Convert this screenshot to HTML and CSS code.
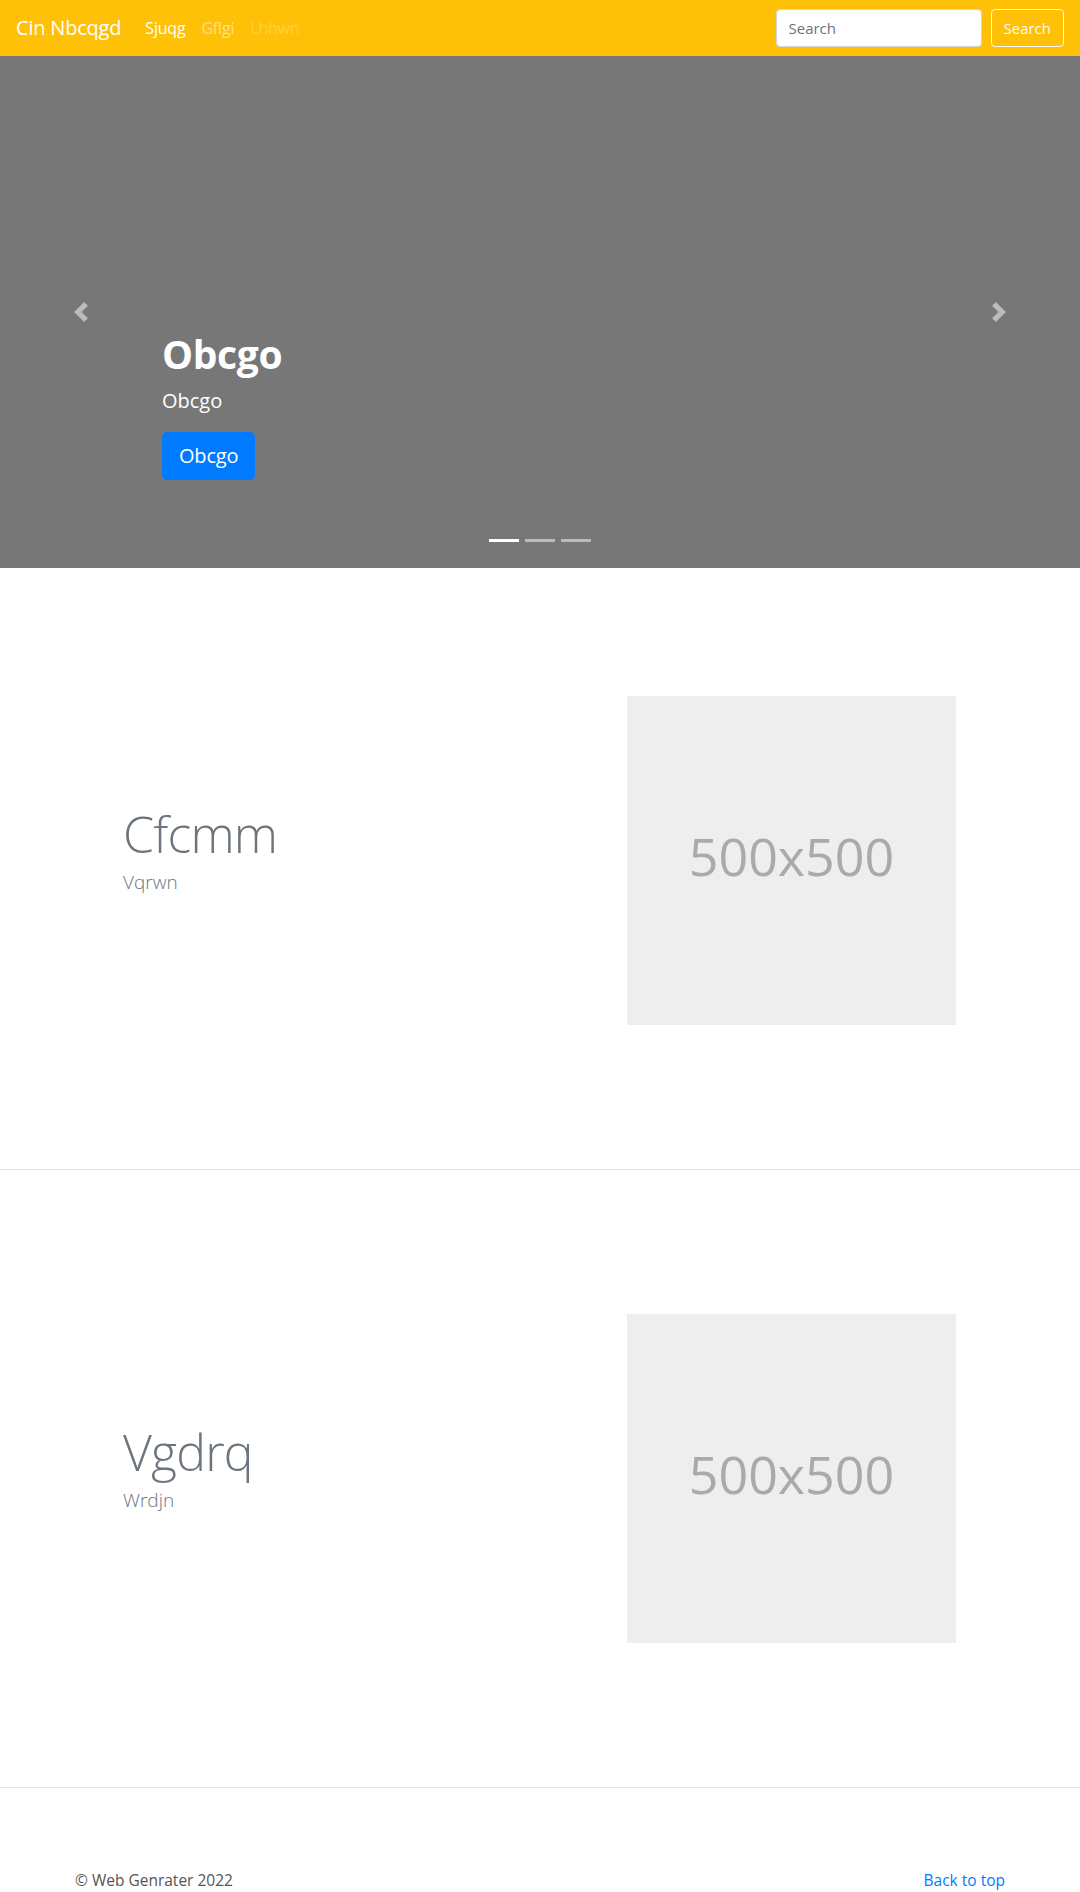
FILE: index.html
```html
<!DOCTYPE html>
<html lang="en">
<head>
<meta charset="utf-8">
<title>Cin Nbcqgd</title>
<link rel="stylesheet" href="styles.css">
</head>
<body>
<nav class="navbar">
  <a class="brand" href="#">Cin Nbcqgd</a>
  <ul class="nav">
    <li><a class="nav-link active" href="#">Sjuqg</a></li>
    <li><a class="nav-link" href="#">Gflgi</a></li>
    <li><a class="nav-link disabled" href="#">Lhhwn</a></li>
  </ul>
  <form class="search">
    <input class="search-input" type="text" placeholder="Search">
    <button class="search-btn" type="button">Search</button>
  </form>
</nav>

<div class="carousel">
  <ol class="indicators">
    <li class="active"></li>
    <li></li>
    <li></li>
  </ol>
  <a class="control prev" href="#">
    <svg class="control-icon" viewBox="0 0 8 8"><path d="M5.25 0l-4 4 4 4 1.5-1.5-2.5-2.5 2.5-2.5-1.5-1.5z"/></svg>
  </a>
  <a class="control next" href="#">
    <svg class="control-icon" viewBox="0 0 8 8"><path d="M2.75 0l-1.5 1.5 2.5 2.5-2.5 2.5 1.5 1.5 4-4-4-4z"/></svg>
  </a>
  <div class="caption">
    <h1 class="caption-title">Obcgo</h1>
    <p class="caption-text">Obcgo</p>
    <p class="caption-action"><a class="btn-primary" href="#">Obcgo</a></p>
  </div>
</div>

<section class="featurette">
  <div class="row">
    <div class="col-text">
      <h2 class="featurette-heading">Cfcmm</h2>
      <p class="lead">Vqrwn</p>
    </div>
    <div class="col-image">
      <div class="placeholder">500x500</div>
    </div>
  </div>
</section>
<hr class="divider">
<section class="featurette">
  <div class="row">
    <div class="col-text">
      <h2 class="featurette-heading">Vgdrq</h2>
      <p class="lead">Wrdjn</p>
    </div>
    <div class="col-image">
      <div class="placeholder">500x500</div>
    </div>
  </div>
</section>
<hr class="divider">

<footer class="footer">
  <p class="copy">&copy; Web Genrater 2022</p>
  <p class="back"><a href="#">Back to top</a></p>
</footer>
</body>
</html>
```

FILE: styles.css
```css
* { box-sizing: border-box; }

html, body {
  margin: 0;
  padding: 0;
}

body {
  font-family: "Open Sans", "Noto Sans", sans-serif;
  font-size: 16px;
  line-height: 1.5;
  color: #212529;
  background: #fff;
}

a { text-decoration: none; }

/* Navbar */
.navbar {
  display: flex;
  align-items: center;
  height: 56px;
  padding: 8px 16px;
  background: #ffc107;
}

.brand {
  font-size: 20px;
  line-height: 30px;
  padding: 5px 0;
  margin-right: 16px;
  color: #fff;
  letter-spacing: -0.2px;
}

.nav {
  display: flex;
  list-style: none;
  margin: 0;
  padding: 0;
  flex: 1;
}

.nav-link {
  display: block;
  padding: 8px;
  font-size: 16px;
  color: rgba(255, 255, 255, 0.5);
  letter-spacing: -0.2px;
}

.nav-link.active { color: #fff; }
.nav-link.disabled { color: rgba(255, 255, 255, 0.25); }

.search {
  display: flex;
  align-items: center;
  gap: 9px;
}

.search-input {
  width: 206px;
  height: 38px;
  padding: 6px 12px;
  font-family: inherit;
  font-size: 15px;
  color: #495057;
  background: #fff;
  border: 1px solid #ced4da;
  border-radius: 4px;
  outline: none;
}

.search-input::placeholder { color: #6c757d; }

.search-btn {
  height: 38px;
  padding: 0 12px;
  font-family: inherit;
  font-size: 15px;
  color: #f8f9fa;
  background: transparent;
  border: 1px solid #f8f9fa;
  border-radius: 4px;
}

/* Carousel */
.carousel {
  position: relative;
  height: 512px;
  background: #777;
  overflow: hidden;
}

.indicators {
  position: absolute;
  left: 0;
  right: 0;
  bottom: 16px;
  display: flex;
  justify-content: center;
  list-style: none;
  margin: 0;
  padding: 0;
}

.indicators li {
  width: 30px;
  height: 3px;
  margin: 10px 3px;
  background: #fff;
  opacity: 0.5;
}

.indicators li.active { opacity: 1; }

.control {
  position: absolute;
  top: 0;
  bottom: 0;
  width: 15%;
  display: flex;
  align-items: center;
  justify-content: center;
  opacity: 0.5;
}

.control.prev { left: 0; }
.control.next { right: 0; }

.control-icon {
  width: 20px;
  height: 20px;
  fill: #fff;
}

.caption {
  position: absolute;
  left: 15%;
  right: 15%;
  bottom: 52px;
  padding: 20px 0;
  color: #fff;
}

.caption-title {
  margin: 0 0 8px;
  font-size: 39px;
  line-height: 1.2;
  font-weight: 700;
  letter-spacing: -0.3px;
}

.caption-text {
  margin: 0 0 16px;
  font-size: 20px;
  line-height: 30px;
}

.caption-action {
  margin: 0 0 16px;
  line-height: 0;
}

.btn-primary {
  display: inline-block;
  height: 48px;
  padding: 8px 16px;
  font-size: 20px;
  line-height: 30px;
  color: #fff;
  background: #007bff;
  border: 1px solid #007bff;
  border-radius: 5px;
  letter-spacing: -0.2px;
}

/* Featurettes */
.featurette {
  width: 960px;
  margin: 0 auto;
  padding: 128px 48px;
}

.row {
  display: flex;
  align-items: center;
}

.col-text {
  flex: 0 0 58.3333%;
  padding: 0 15px;
}

.col-image {
  flex: 0 0 41.6667%;
  padding: 0 15px;
}

.featurette-heading {
  margin: 0 0 8px;
  font-size: 50px;
  line-height: 1;
  font-weight: 300;
  color: #6c757d;
  letter-spacing: -0.8px;
}

.lead {
  margin: 0 0 16px;
  font-size: 19px;
  line-height: 30px;
  font-weight: 300;
  color: #6c757d;
}

.placeholder {
  width: 329px;
  height: 329px;
  display: flex;
  align-items: center;
  justify-content: center;
  padding-bottom: 10px;
  background: #eee;
  color: #aaa;
  font-size: 52px;
  line-height: 1;
}

.divider {
  margin: 16px 0;
  border: 0;
  border-top: 1px solid rgba(0, 0, 0, 0.1);
  height: 0;
}

/* Footer */
.footer {
  width: 960px;
  margin: 0 auto;
  padding: 64px 15px 0;
  display: flex;
  justify-content: space-between;
}

.footer p {
  margin: 0 0 16px;
  font-size: 15.5px;
  line-height: 24px;
}

.copy { color: #555; }

.back a { color: #007bff; }
```
